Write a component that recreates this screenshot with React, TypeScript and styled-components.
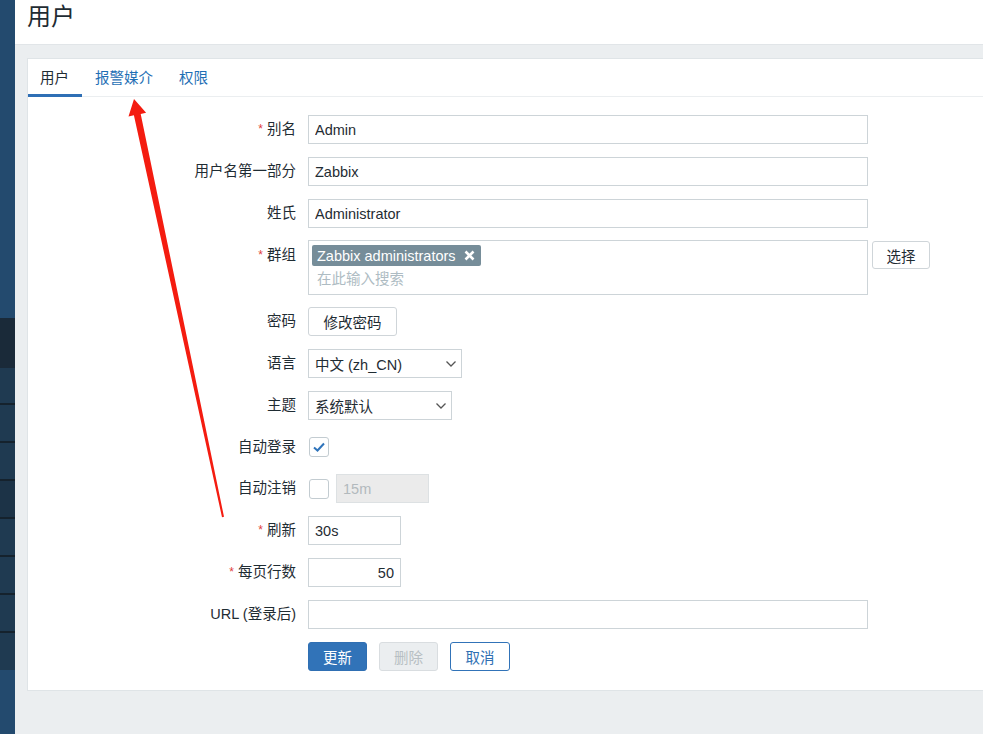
import React from "react";
import styled, { createGlobalStyle } from "styled-components";

const GlobalStyle = createGlobalStyle`
  html, body {
    margin: 0;
    padding: 0;
    background: #ebeef0;
    font-family: "Liberation Sans", "Noto Sans CJK SC", sans-serif;
    color: #1f2c33;
  }
  * { box-sizing: border-box; }
`;

const Page = styled.div`
  position: relative;
  display: flex;
  width: 983px;
  height: 734px;
  overflow: hidden;
`;

// left navigation strip (collapsed)
const Sidebar = styled.nav`
  width: 15px;
  flex-shrink: 0;
  display: flex;
  flex-direction: column;
  background: #234a6e;
`;

const NavBlock = styled.div<{ $h: number; $bg: string; $sep?: boolean }>`
  height: ${(p) => p.$h}px;
  background: ${(p) => p.$bg};
  border-bottom: ${(p) => (p.$sep ? "2px solid #15222d" : "none")};
`;

const Main = styled.main`
  flex: 1;
  display: flex;
  flex-direction: column;
  min-width: 0;
`;

const Header = styled.header`
  height: 45px;
  background: #fff;
  border-bottom: 1px solid #e1e5e8;
  padding: 1px 0 0 12px;
`;

const Title = styled.h1`
  margin: 0;
  font-size: 24px;
  font-weight: normal;
  line-height: 32px;
  color: #1f2c33;
`;

const Content = styled.div`
  padding: 13px 0 0 12px;
`;

const Card = styled.section`
  background: #fff;
  border: 1px solid #dfe4e7;
  border-right: none;
  height: 633px;
`;

const TabList = styled.div`
  display: flex;
  border-bottom: 1px solid #ebeef0;
  height: 38px;
`;

const Tab = styled.div<{ $active?: boolean }>`
  display: flex;
  align-items: center;
  height: 38px;
  padding: 0 13px 0 12px;
  margin-right: 1px;
  font-size: 14.5px;
  color: ${(p) => (p.$active ? "#1f2c33" : "#1f6fb5")};
  border-bottom: 3px solid ${(p) => (p.$active ? "#2f6fb5" : "transparent")};
`;

const Form = styled.div`
  display: grid;
  grid-template-columns: 268px 1fr;
  column-gap: 12px;
  row-gap: 13px;
  padding-top: 18px;
  font-size: 14.5px;
`;

const Label = styled.div<{ $lh?: number }>`
  display: flex;
  justify-content: flex-end;
  align-items: flex-start;
  line-height: ${(p) => p.$lh ?? 29}px;
  white-space: nowrap;
`;

const Star = styled.span`
  color: #e0403c;
  font-size: 12px;
  margin-right: 4px;
`;

const Field = styled.div`
  display: flex;
  align-items: center;
  gap: 7px;
  min-height: 29px;
`;

const TextInput = styled.input<{ $w?: number; $right?: boolean }>`
  width: ${(p) => (p.$w ? `${p.$w}px` : "560px")};
  height: 29px;
  border: 1px solid #cdd4d8;
  border-radius: 0;
  padding: 0 6px;
  font: inherit;
  color: #1f2c33;
  background: #fff;
  text-align: ${(p) => (p.$right ? "right" : "left")};
  outline: none;
  &:disabled {
    background: #ebebeb;
    border-color: #dde1e3;
    color: #b2b9bd;
  }
`;

const MultiBox = styled.div`
  width: 560px;
  height: 55px;
  border: 1px solid #cdd4d8;
  padding: 4px 3px;
`;

const Tag = styled.span`
  display: inline-flex;
  align-items: center;
  gap: 8px;
  height: 21px;
  padding: 0 6px 0 5px;
  background: #768d99;
  color: #fff;
  border-radius: 2px;
  font-size: 14.5px;
`;

const Placeholder = styled.div`
  padding: 2px 5px 0;
  line-height: 22px;
  color: #aebcc3;
`;

const Button = styled.button<{ $kind?: "primary" | "disabled" | "outline" | "plain"; $w: number; $h?: number }>`
  height: ${(p) => p.$h ?? 29}px;
  width: ${(p) => p.$w}px;
  padding: 0;
  white-space: nowrap;
  font: inherit;
  border-radius: 3px;
  border: 1px solid
    ${(p) =>
      p.$kind === "primary" ? "#2f6fb3" : p.$kind === "disabled" ? "#d9dde0" : p.$kind === "outline" ? "#3173b8" : "#cfd5d9"};
  background: ${(p) => (p.$kind === "primary" ? "#3173b8" : p.$kind === "disabled" ? "#ebeef0" : "#fff")};
  color: ${(p) =>
    p.$kind === "primary" ? "#fff" : p.$kind === "disabled" ? "#b7bfc3" : p.$kind === "outline" ? "#2f6fb3" : "#1f2c33"};
`;

const GroupField = styled.div`
  display: flex;
  align-items: flex-start;
  gap: 4px;
  margin: -1px 0 -1px;
`;

const SelectBox = styled.div<{ $w: number }>`
  width: ${(p) => p.$w}px;
  height: 29px;
  border: 1px solid #cdd4d8;
  display: flex;
  align-items: center;
  justify-content: space-between;
  padding: 0 4px 0 6px;
  background: #fff;
`;

const Check = styled.span`
  width: 20px;
  height: 20px;
  border: 1px solid #c3ccd1;
  border-radius: 3px;
  display: inline-flex;
  align-items: center;
  justify-content: center;
  margin-left: 1px;
  background: #fff;
`;

const CheckField = styled(Field)`
  min-height: 28px;
`;

const Actions = styled.div`
  display: flex;
  gap: 12px;
`;

const ArrowLayer = styled.svg`
  position: absolute;
  left: 0;
  top: 0;
  pointer-events: none;
`;

const Chevron = () => (
  <svg width="12" height="8" viewBox="0 0 12 8">
    <polyline points="1.5,1.5 6,6 10.5,1.5" fill="none" stroke="#555" strokeWidth="1.3" />
  </svg>
);

const navBlocks = [
  { h: 318, bg: "#234a6e" },
  { h: 50, bg: "#1a2a39" },
  { h: 37, bg: "#1f3a51", sep: true },
  { h: 38, bg: "#1f3a51", sep: true },
  { h: 38, bg: "#1f3a51", sep: true },
  { h: 38, bg: "#1c3347", sep: true },
  { h: 38, bg: "#1f3a51", sep: true },
  { h: 38, bg: "#1f3a51", sep: true },
  { h: 38, bg: "#1f3a51", sep: true },
  { h: 37, bg: "#1f3a51" },
];

function Req({ children }: { children: React.ReactNode }) {
  return (
    <Label>
      <Star>*</Star>
      {children}
    </Label>
  );
}

export default function App() {
  return (
    <>
      <GlobalStyle />
      <Page>
        <Sidebar>
          {navBlocks.map((b, i) => (
            <NavBlock key={i} $h={b.h} $bg={b.bg} $sep={b.sep} />
          ))}
        </Sidebar>
        <Main>
          <Header>
            <Title>用户</Title>
          </Header>
          <Content>
            <Card>
              <TabList>
                <Tab $active>用户</Tab>
                <Tab>报警媒介</Tab>
                <Tab>权限</Tab>
              </TabList>
              <Form>
                <Req>别名</Req>
                <Field>
                  <TextInput defaultValue="Admin" />
                </Field>

                <Label>用户名第一部分</Label>
                <Field>
                  <TextInput defaultValue="Zabbix" />
                </Field>

                <Label>姓氏</Label>
                <Field>
                  <TextInput defaultValue="Administrator" />
                </Field>

                <Req>群组</Req>
                <GroupField>
                  <MultiBox>
                    <Tag>
                      Zabbix administrators
                      <svg width="11" height="11" viewBox="0 0 11 11">
                        <path d="M1.5 1.5 L9.5 9.5 M9.5 1.5 L1.5 9.5" stroke="#fff" strokeWidth="2.6" />
                      </svg>
                    </Tag>
                    <Placeholder>在此输入搜索</Placeholder>
                  </MultiBox>
                  <Button $kind="plain" $w={58} $h={28} style={{ marginTop: 1 }}>
                    选择
                  </Button>
                </GroupField>

                <Label>密码</Label>
                <Field>
                  <Button $kind="plain" $w={89}>修改密码</Button>
                </Field>

                <Label>语言</Label>
                <Field>
                  <SelectBox $w={154}>
                    中文 (zh_CN)
                    <Chevron />
                  </SelectBox>
                </Field>

                <Label>主题</Label>
                <Field>
                  <SelectBox $w={144}>
                    系统默认
                    <Chevron />
                  </SelectBox>
                </Field>

                <Label $lh={28}>自动登录</Label>
                <CheckField>
                  <Check>
                    <svg width="14" height="12" viewBox="0 0 14 12">
                      <polyline points="2,6.5 5.5,9.5 12,2.5" fill="none" stroke="#2f74bb" strokeWidth="2" />
                    </svg>
                  </Check>
                </CheckField>

                <Label>自动注销</Label>
                <Field>
                  <Check />
                  <TextInput $w={93} defaultValue="15m" disabled />
                </Field>

                <Req>刷新</Req>
                <Field>
                  <TextInput $w={93} defaultValue="30s" />
                </Field>

                <Req>每页行数</Req>
                <Field>
                  <TextInput $w={93} $right defaultValue="50" />
                </Field>

                <Label>URL (登录后)</Label>
                <Field>
                  <TextInput defaultValue="" />
                </Field>

                <div />
                <Actions>
                  <Button $kind="primary" $w={59}>更新</Button>
                  <Button $kind="disabled" $w={59}>删除</Button>
                  <Button $kind="outline" $w={60}>取消</Button>
                </Actions>
              </Form>
            </Card>
          </Content>
        </Main>
        <ArrowLayer width="983" height="734" viewBox="0 0 983 734">
          <polygon points="134,99 146.1,112.7 140.7,113.9 224,516.8 222,517.2 133.9,115.3 128.5,116.5" fill="#f41c10" />
        </ArrowLayer>
      </Page>
    </>
  );
}
